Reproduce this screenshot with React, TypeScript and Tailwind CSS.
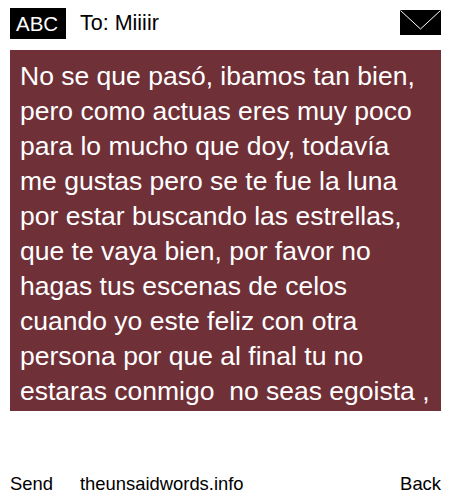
const LINES = [
  'No se que pasó, ibamos tan bien,',
  'pero como actuas eres muy poco',
  'para lo mucho que doy, todavía',
  'me gustas pero se te fue la luna',
  'por estar buscando las estrellas,',
  'que te vaya bien, por favor no',
  'hagas tus escenas de celos',
  'cuando yo este feliz con otra',
  'persona por que al final tu no',
  'estaras conmigo\u00a0 no seas egoista ,',
];

const Envelope = () => (
  <svg width="41" height="25" viewBox="0 0 41 25" className="block">
    <rect width="41" height="25" fill="#000" />
    <path d="M0.5 0.5 L20.5 19 L40.5 0.5" fill="none" stroke="#fff" strokeWidth="1" />
  </svg>
);

export default function App() {
  return (
    <div className="w-[450px] h-[500px] bg-white text-black flex flex-col font-['Liberation_Sans',Arial,sans-serif] overflow-hidden">
      <header className="h-[50px] pt-2 pl-[10px] pr-[9px] flex items-start">
        <div className="w-[56px] h-[31px] bg-black text-white text-[20.5px] leading-[31px] pl-[6px]">ABC</div>
        <div className="ml-[14px] text-[21.5px] leading-[31px]">To: Miiiir</div>
        <div className="ml-auto pt-[2px]">
          <Envelope />
        </div>
      </header>
      <main className="mx-[9px] ml-[10px] h-[361px] bg-[#703038] text-white text-[26.5px] leading-[35px] px-[10px] pt-[9px] overflow-hidden">
        {LINES.map((line) => (
          <div key={line} className="whitespace-nowrap">{line}</div>
        ))}
      </main>
      <footer className="mt-auto h-[29px] pl-[10px] pr-[9px] flex items-start text-[18.4px] leading-[26px]">
        <span className="w-[70px]">Send</span>
        <span>theunsaidwords.info</span>
        <span className="ml-auto">Back</span>
      </footer>
    </div>
  );
}
